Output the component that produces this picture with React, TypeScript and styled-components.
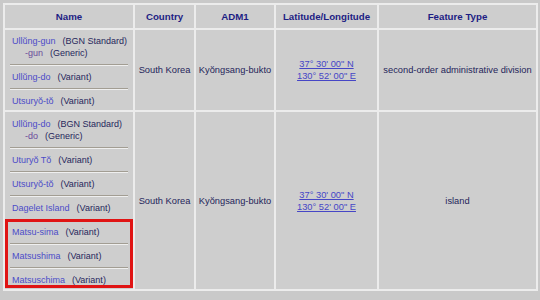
import React from "react";
import styled, { createGlobalStyle } from "styled-components";

const Global = createGlobalStyle`
  html, body { margin: 0; padding: 0; background: #c9c9c9; }
  body { width: 540px; height: 300px; overflow: hidden; font-family: "Liberation Sans", Arial, sans-serif; }
`;

const Table = styled.table`
  width: 535px;
  margin: 3px;
  table-layout: fixed;
  border-collapse: separate;
  border-spacing: 2px;
  background: #ececec;
  font-family: "Liberation Sans", Arial, sans-serif;
  font-size: 9.3px;
`;

const HeadCell = styled.th`
  height: 23px;
  padding: 0;
  background: #cecece;
  color: #1d1d84;
  font-weight: bold;
  font-size: 9.7px;
  text-align: center;
  vertical-align: middle;
`;

const Cell = styled.td`
  padding: 0;
  background: #cecece;
  color: #25255a;
  text-align: center;
  vertical-align: middle;
  line-height: 12px;
`;

const NameCell = styled.td`
  padding: 0;
  background: #cecece;
  vertical-align: top;
  text-align: left;
  line-height: 12px;
  font-size: 9px;
`;

const Entry = styled.div<{ $top: number; $bottom: number }>`
  padding: ${(p) => p.$top}px 6px ${(p) => p.$bottom}px 7px;
  white-space: nowrap;
`;

const Line = styled.div<{ $indent?: boolean }>`
  padding-left: ${(p) => (p.$indent ? 13 : 0)}px;
`;

const NameLink = styled.span<{ $alt?: boolean }>`
  color: ${(p) => (p.$alt ? "#6b4a9c" : "#4c4cc8")};
`;

const Kind = styled.span`
  color: #27275c;
  margin-left: 7px;
`;

const Rule = styled.div`
  margin: 0 5px;
  height: 0;
  border-top: 1px solid #a29d93;
  border-bottom: 1px solid #efefef;
`;

const Highlight = styled.div`
  position: relative;
  &::after {
    content: "";
    position: absolute;
    left: 0;
    right: 0;
    top: 0;
    bottom: 1px;
    border: 3px solid #e01414;
    pointer-events: none;
  }
`;

const Coord = styled.a`
  display: inline-block;
  color: #4646c6;
  text-decoration: underline;
  line-height: 11px;
`;

type Name = { name: string; kind: string; generic?: string };
type Spacing = { top: number; bottom: number; firstTop: number; lastBottom: number };

const NameList: React.FC<{ names: Name[]; sp: Spacing; highlightFrom?: number }> = ({
  names,
  sp,
  highlightFrom,
}) => {
  const renderEntry = (n: Name, idx: number) => (
    <Entry
      $top={idx === 0 ? sp.firstTop : sp.top}
      $bottom={idx === names.length - 1 ? sp.lastBottom : sp.bottom}
    >
      <Line>
        <NameLink>{n.name}</NameLink>
        <Kind>({n.kind})</Kind>
      </Line>
      {n.generic && (
        <Line $indent>
          <NameLink $alt>{n.generic}</NameLink>
          <Kind>(Generic)</Kind>
        </Line>
      )}
    </Entry>
  );
  const cut = highlightFrom ?? names.length;
  const before = names.slice(0, cut);
  const after = names.slice(cut);
  return (
    <>
      {before.map((n, i) => (
        <React.Fragment key={n.name + i}>
          {i > 0 && <Rule />}
          {renderEntry(n, i)}
        </React.Fragment>
      ))}
      {after.length > 0 && (
        <Highlight>
          {after.map((n, i) => (
            <React.Fragment key={n.name + i}>
              <Rule />
              {renderEntry(n, cut + i)}
            </React.Fragment>
          ))}
        </Highlight>
      )}
    </>
  );
};

const LatLon: React.FC = () => (
  <>
    <Coord href="#">37° 30' 00" N</Coord>
    <br />
    <Coord href="#">130° 52' 00" E</Coord>
  </>
);

const rows: { names: Name[]; sp: Spacing; feature: string; highlightFrom?: number }[] = [
  {
    names: [
      { name: "Ullŭng-gun", kind: "BGN Standard", generic: "-gun" },
      { name: "Ullŭng-do", kind: "Variant" },
      { name: "Utsuryŏ-tŏ", kind: "Variant" },
    ],
    sp: { top: 5, bottom: 5, firstTop: 5, lastBottom: 3 },
    feature: "second-order administrative division",
  },
  {
    names: [
      { name: "Ullŭng-do", kind: "BGN Standard", generic: "-do" },
      { name: "Uturyŏ Tŏ", kind: "Variant" },
      { name: "Utsuryŏ-tŏ", kind: "Variant" },
      { name: "Dagelet Island", kind: "Variant" },
      { name: "Matsu-sima", kind: "Variant" },
      { name: "Matsushima", kind: "Variant" },
      { name: "Matsuschima", kind: "Variant" },
    ],
    sp: { top: 5, bottom: 5, firstTop: 6, lastBottom: 3 },
    feature: "island",
    highlightFrom: 4,
  },
];

export default function App() {
  return (
    <>
      <Global />
      <Table>
        <colgroup>
          <col style={{ width: 128 }} />
          <col style={{ width: 59 }} />
          <col style={{ width: 78 }} />
          <col style={{ width: 101 }} />
          <col />
        </colgroup>
        <thead>
          <tr>
            <HeadCell>Name</HeadCell>
            <HeadCell>Country</HeadCell>
            <HeadCell>ADM1</HeadCell>
            <HeadCell>Latitude/Longitude</HeadCell>
            <HeadCell>Feature Type</HeadCell>
          </tr>
        </thead>
        <tbody>
          {rows.map((r, i) => (
            <tr key={i}>
              <NameCell>
                <NameList names={r.names} sp={r.sp} highlightFrom={r.highlightFrom} />
              </NameCell>
              <Cell>South Korea</Cell>
              <Cell>Kyŏngsang-bukto</Cell>
              <Cell>
                <LatLon />
              </Cell>
              <Cell>{r.feature}</Cell>
            </tr>
          ))}
        </tbody>
      </Table>
    </>
  );
}
